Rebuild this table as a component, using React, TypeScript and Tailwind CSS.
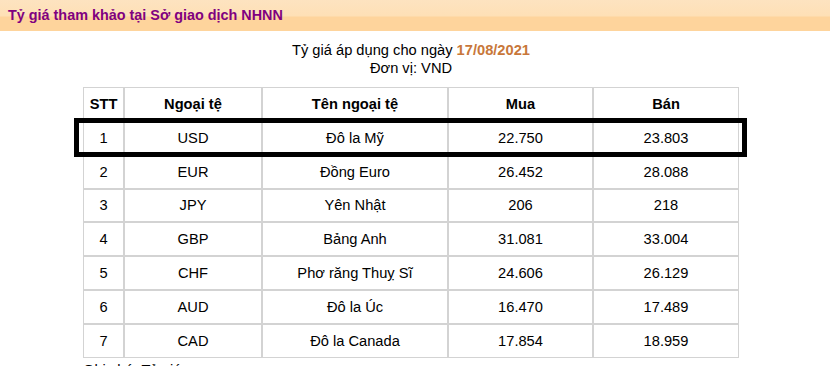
import React from "react";

const rows = [
  ["1", "USD", "Đô la Mỹ", "22.750", "23.803"],
  ["2", "EUR", "Đồng Euro", "26.452", "28.088"],
  ["3", "JPY", "Yên Nhật", "206", "218"],
  ["4", "GBP", "Bảng Anh", "31.081", "33.004"],
  ["5", "CHF", "Phơ răng Thuỵ Sĩ", "24.606", "26.129"],
  ["6", "AUD", "Đô la Úc", "16.470", "17.489"],
  ["7", "CAD", "Đô la Canada", "17.854", "18.959"],
];

const widths = ["w-[41px]", "w-[138px]", "w-[186px]", "w-[145px]", "w-[146px]"];
const heads = ["STT", "Ngoại tệ", "Tên ngoại tệ", "Mua", "Bán"];

export default function App() {
  return (
    <div className="relative w-[830px] h-[366px] overflow-hidden bg-white text-black" style={{ fontFamily: '"Liberation Sans", Arial, sans-serif' }}>
      <div className="h-[31px] flex items-center pl-[8px] bg-[linear-gradient(to_bottom,#fde3c0_0px,#fee0b6_16px,#fed49c_17px,#fed49c_31px)]">
        <span className="text-[14.4px] font-bold text-[#800080]">Tỷ giá tham khảo tại Sở giao dịch NHNN</span>
      </div>
      <div className="pl-[83px] pt-[10px]">
        <div className="w-[656px] text-center text-[14.67px] leading-[18px]">
          <div>
            Tỷ giá áp dụng cho ngày <span className="font-bold text-[#c8773a]">17/08/2021</span>
          </div>
          <div>Đơn vị: VND</div>
        </div>
        <table className="mt-[10px] w-[656px] border-separate border-spacing-0 text-[14.67px] table-fixed">
          <thead>
            <tr>
              {heads.map((h, i) => (
                <th key={h} className={`${widths[i]} h-[33.85px] border border-[#d3d3d3] text-center font-bold p-0`}>
                  {h}
                </th>
              ))}
            </tr>
          </thead>
          <tbody>
            {rows.map((r) => (
              <tr key={r[0]}>
                {r.map((c, i) => (
                  <td key={i} className="h-[33.85px] border border-[#d3d3d3] text-center p-0">
                    {c}
                  </td>
                ))}
              </tr>
            ))}
          </tbody>
        </table>
        <div className="text-[14.67px] leading-[18px] mt-[3px]">Ghi chú: Tỷ giá</div>
      </div>
      <div className="absolute left-[74px] top-[118px] w-[673px] h-[39px] border-[5px] border-black pointer-events-none" />
    </div>
  );
}
